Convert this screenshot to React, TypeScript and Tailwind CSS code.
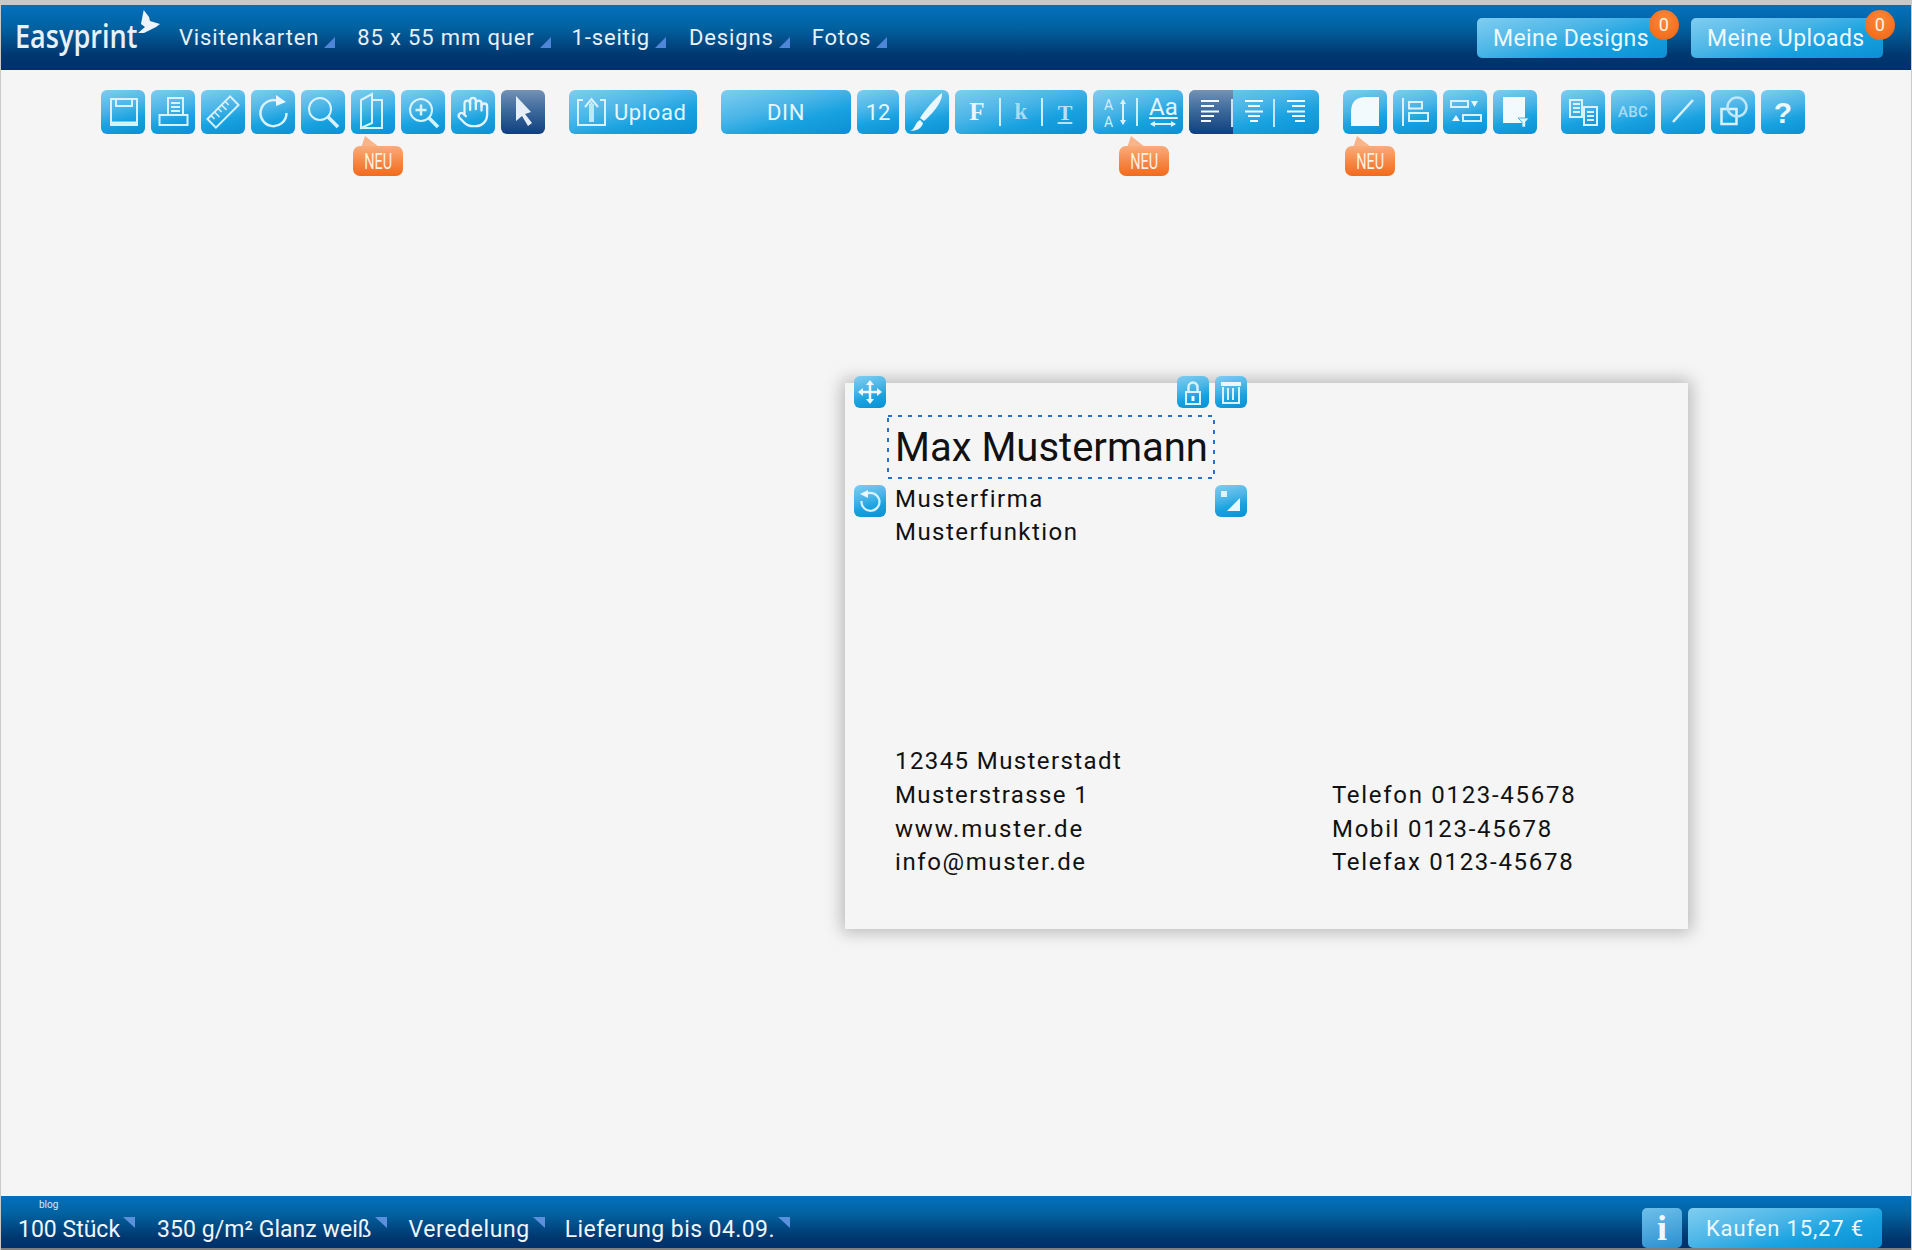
import type { ReactNode } from "react";
import { Hand } from "lucide-react";

const blue = "bg-[linear-gradient(165deg,#80cdf0_0%,#4ab5e7_40%,#18a2e0_66%,#0a90d4_100%)]";
const dark = "bg-[linear-gradient(180deg,#7392b6_0%,#3e6a9c_45%,#0f3f7f_100%)]";
const ic = { fill: "none", stroke: "#d9f1fb", strokeWidth: 2 };
const solid = { fill: "#eaf7fd" };

function Icon({ children }: { children: ReactNode }) {
  return (
    <svg viewBox="0 0 44 44" className="w-[44px] h-[44px]">
      {children}
    </svg>
  );
}

function Btn({ children, active, className = "w-[44px]" }: { children?: ReactNode; active?: boolean; className?: string }) {
  return (
    <div className={`relative h-[44px] rounded-[6px] flex items-center justify-center text-[#e6f6fd] text-[22px] ${active ? dark : blue} ${className}`}>
      {children}
    </div>
  );
}

function Neu({ className }: { className: string }) {
  return (
    <div className={`absolute top-[46px] h-[40px] w-[50px] ${className}`}>
      <svg viewBox="0 0 50 12" className="absolute left-0 top-0 w-[50px] h-[12px]">
        <path d="M8 12 L12 0 L26 11 L26 12 Z" fill="#f9b48a" />
      </svg>
      <div className="absolute left-0 top-[10px] w-[50px] h-[30px] rounded-[7px] bg-[linear-gradient(180deg,#f9ac7b_0%,#f58a4a_50%,#f36a1b_100%)] flex items-center justify-center">
        <span className="text-[#fff0e6] text-[22px] scale-x-[0.66]">NEU</span>
      </div>
    </div>
  );
}

function NavItem({ label, className }: { label: string; className: string }) {
  return (
    <div className={`flex items-center tracking-[0.85px] text-[22px] text-[#e8f1f8] ${className}`}>
      <span>{label}</span>
      <svg viewBox="0 0 11 11" className="w-[11px] h-[11px] ml-[5px] mt-[10px]">
        <polygon points="11,0 11,11 0,11" fill="#4f86d8" />
      </svg>
    </div>
  );
}

function FootItem({ label, className }: { label: string; className: string }) {
  return (
    <div className={`flex text-[23px] leading-[30px] text-[#f0f6fb] mb-[3px] ${className}`}>
      <span>{label}</span>
      <svg viewBox="0 0 12 11" className="w-[12px] h-[11px] ml-[3px] mt-[2px]">
        <polygon points="0,0 12,0 12,11" fill="#5b90dc" />
      </svg>
    </div>
  );
}

function TopBtn({ label, className }: { label: string; className: string }) {
  return (
    <div className={`relative h-[40px] rounded-[5px] flex items-center pl-[16px] pt-[3px] text-[23px] tracking-[0.4px] text-[#eef9fe] ${blue} ${className}`}>
      {label}
      <div className="absolute right-[-12px] top-[-8px] w-[30px] h-[30px] rounded-full bg-[radial-gradient(circle_at_50%_35%,#fb8a3c,#f0620f)] flex items-center justify-center text-[18px] text-[#fff3e8]">
        0
      </div>
    </div>
  );
}

function Handle({ className, children }: { className: string; children: ReactNode }) {
  return (
    <div className={`absolute w-[32px] h-[32px] rounded-[6px] ${blue} ${className}`}>
      <svg viewBox="0 0 32 32" className="w-[32px] h-[32px]">
        {children}
      </svg>
    </div>
  );
}

export default function App() {
  return (
    <div className="w-[1912px] h-[1250px] flex flex-col bg-[#f5f5f5] border-x border-x-[#c9c9c9] font-[Roboto,sans-serif] overflow-hidden">
      <div className="h-[5px] bg-[#c9c9c9] mx-[-1px] shrink-0" />

      {/* Header */}
      <div className="h-[65px] shrink-0 flex items-center bg-[linear-gradient(180deg,#0271bf_0%,#02619f_35%,#00376f_78%,#00306b_100%)]">
        <div className="relative w-[178px] h-[65px]">
          <span className="absolute left-[14px] top-[8px] font-['Open_Sans',sans-serif] font-semibold text-[33px] leading-[45px] text-[#e9f1f8] origin-left scale-x-[0.82]">
            Easyprint
          </span>
          <svg viewBox="0 0 24 26" className="absolute left-[136px] top-[4px] w-[24px] h-[26px]">
            <path d="M4 15L6.7 1L12 8L13 12L23 15L19 18L13 21L7 24L1 24L8 18Z" fill="#eef4fa" />
          </svg>
        </div>
        <NavItem label="Visitenkarten" className="" />
        <NavItem label="85 x 55 mm quer" className="ml-[22px]" />
        <NavItem label="1-seitig" className="ml-[21px]" />
        <NavItem label="Designs" className="ml-[23px]" />
        <NavItem label="Fotos" className="ml-[22px]" />
        <TopBtn label="Meine Designs" className="ml-auto w-[190px]" />
        <TopBtn label="Meine Uploads" className="ml-[24px] mr-[28px] w-[192px]" />
      </div>

      {/* Toolbar */}
      <div className="mt-[20px] ml-[100px] flex h-[44px] shrink-0">
        <div className="flex gap-[6px]">
          <Btn>
            <Icon>
              <path d="M10 9H36V35H10Z M15 9V16H31V9" {...ic} />
              <path d="M10 33H36" {...ic} strokeWidth={3} />
            </Icon>
          </Btn>
          <Btn>
            <Icon>
              <path d="M8.5 25H36.5V35H8.5Z M17 25V8H32V25 M20 13H29 M20 17H29 M20 21H29" {...ic} />
            </Icon>
          </Btn>
          <Btn>
            <Icon>
              <g transform="rotate(-45 22 22)">
                <rect x="6" y="16" width="32" height="12" {...ic} />
                <path d="M11 16V21 M16 16V23 M21 16V21 M26 16V23 M31 16V21" {...ic} strokeWidth={1.5} />
              </g>
            </Icon>
          </Btn>
          <Btn>
            <Icon>
              <path d="M30 12.5A13 13 0 1 0 35.5 23" {...ic} strokeWidth={2.5} />
              <polygon points="25,5 35,12 25,16" fill="#eaf7fd" />
            </Icon>
          </Btn>
          <Btn>
            <Icon>
              <circle cx="19" cy="19" r="11" {...ic} />
              <path d="M27 27L37 37" {...ic} strokeWidth={3.5} />
            </Icon>
          </Btn>
          <Btn>
            <Icon>
              <path d="M10 10L21 4V33L10 38Z M21 10H31V38H10" {...ic} />
            </Icon>
            <Neu className="left-[2px]" />
          </Btn>
          <Btn>
            <Icon>
              <circle cx="20" cy="20" r="11" {...ic} />
              <path d="M14.5 20H25.5 M20 14.5V25.5" {...ic} strokeWidth={2.5} />
              <path d="M28 28L37 37" {...ic} strokeWidth={3.5} />
            </Icon>
          </Btn>
          <Btn>
            <Hand size={34} color="#e3f4fc" strokeWidth={1.6} />
          </Btn>
          <Btn active>
            <Icon>
              <polygon points="15,6 30,22 24,24 31,33 27,36 21,26 15,31" fill="#e6eef6" />
            </Icon>
          </Btn>
        </div>

        <Btn className="ml-[24px] w-[128px] justify-start">
          <svg viewBox="0 0 40 44" className="w-[40px] h-[44px] shrink-0">
            <path d="M14 10H9V35H36V10H31 M22.5 32V12 M16 17L22.5 9L29 17" {...ic} />
            <path d="M22.5 32V14" {...ic} strokeWidth={5} stroke="#bfe6f8" />
          </svg>
          <span className="tracking-[0.6px] ml-[5px]">Upload</span>
        </Btn>

        <Btn className="ml-[24px] w-[130px] tracking-[0.6px]">DIN</Btn>
        <div className="ml-[6px] flex gap-[6px]">
          <Btn className="w-[42px]">12</Btn>
          <Btn>
            <Icon>
              <path d="M37 3C38 12 26 25 19 31L15 28C20 20 30 8 37 3Z" {...solid} />
              <path d="M5 41C10 40 10 32 15 30L18 33C17 38 12 41 5 41Z" {...solid} />
            </Icon>
          </Btn>
          <Btn className="w-[132px] text-[#eaf7fd]">
            <div className="flex w-[132px] h-[44px]">
              <div className="w-[44px] flex items-center justify-center font-['Liberation_Serif',serif] font-bold text-[25px]">F</div>
              <div className="w-[44px] flex items-center justify-center font-['Liberation_Serif',serif] font-bold text-[#a9dcf4] text-[23px] border-x-2 border-x-[#cdeefb] my-[8px]">k</div>
              <div className="w-[44px] flex items-center justify-center font-['Liberation_Serif',serif] font-bold text-[#b5e2f6] text-[22px] underline underline-offset-2">T</div>
            </div>
          </Btn>
          <Btn className="w-[90px]">
            <div className="flex w-[90px] h-[44px] text-[#d3effb]">
              <div className="relative w-[45px] border-r-2 border-r-[#cdeefb] my-[8px]">
                <span className="absolute left-[11px] top-[-1px] text-[14px] leading-[16px]">A</span>
                <span className="absolute left-[11px] top-[16px] text-[14px] leading-[16px]">A</span>
                <svg viewBox="0 0 8 28" className="absolute left-[26px] top-0 w-[8px] h-[28px]">
                  <path d="M4 2V26" {...ic} />
                  <path d="M1 6L4 1L7 6Z M1 22L4 27L7 22Z" fill="#d9f1fb" />
                </svg>
              </div>
              <div className="relative flex-1">
                <span className="absolute left-[11px] top-[4px] text-[24px] leading-[26px] text-[#e3f5fc] underline underline-offset-2">Aa</span>
                <svg viewBox="0 0 28 8" className="absolute left-[11px] top-[30px] w-[28px] h-[8px]">
                  <path d="M2 4H26" {...ic} />
                  <path d="M6 1L1 4L6 7Z M22 1L27 4L22 7Z" fill="#d9f1fb" />
                </svg>
              </div>
            </div>
            <Neu className="left-[26px]" />
          </Btn>
          <div className={`flex w-[130px] h-[44px] rounded-[6px] overflow-hidden ${blue}`}>
            <div className={`w-[44px] h-[44px] ${dark}`}>
              <Icon>
                <path d="M12 11H30 M12 16H25 M12 21.5H30 M12 26H25 M12 31H22" stroke="#f4f9fd" strokeWidth={2} fill="none" />
                <path d="M43 9V37" stroke="#c8e4f5" strokeWidth={2} />
              </Icon>
            </div>
            <div className="w-[42px] h-[44px]">
              <svg viewBox="0 0 42 44" className="w-[42px] h-[44px]">
                <path d="M12 11H30 M15 16H27 M12 21.5H30 M15 26H27 M17 31H25" stroke="#f4f9fd" strokeWidth={2} fill="none" />
                <path d="M41 9V37" stroke="#c8e4f5" strokeWidth={2} />
              </svg>
            </div>
            <div className="w-[44px] h-[44px]">
              <Icon>
                <path d="M12 11H30 M17 16H30 M12 21.5H30 M17 26H30 M20 31H30" stroke="#f4f9fd" strokeWidth={2} fill="none" />
              </Icon>
            </div>
          </div>
        </div>

        <div className="ml-[24px] flex gap-[6px]">
          <Btn>
            <Icon>
              <path d="M8 36V22Q8 7 23 7H36V36Z" fill="#f3fafd" />
            </Icon>
            <Neu className="left-[2px]" />
          </Btn>
          <Btn>
            <Icon>
              <path d="M10 8V36" {...ic} />
              <rect x="16" y="12" width="13" height="6.5" {...ic} />
              <rect x="16" y="23" width="19" height="8" {...ic} />
            </Icon>
          </Btn>
          <Btn>
            <Icon>
              <rect x="8" y="11" width="17" height="6" {...ic} />
              <rect x="20" y="25" width="18" height="6" {...ic} />
              <polygon points="28,11 35,11 31.5,17" {...solid} />
              <polygon points="9,31 17,31 13,25" {...solid} />
            </Icon>
          </Btn>
          <Btn>
            <Icon>
              <rect x="10" y="7" width="22" height="26" fill="#f3fafd" />
              <path d="M25 28H36L32.5 32V37H29V32Z" fill="#e4f5fc" stroke="#2aa4df" strokeWidth={0.8} />
            </Icon>
          </Btn>
        </div>

        <div className="ml-[24px] flex gap-[6px]">
          <Btn>
            <Icon>
              <path d="M9 10H21V27H9Z M23 17H36V35H23Z" {...ic} />
              <path d="M12 14H19 M12 18H19 M12 22H19 M26 22H33 M26 26H33 M26 30H33" {...ic} strokeWidth={2} />
            </Icon>
          </Btn>
          <Btn>
            <span className="text-[15px] font-medium text-[#a9dcf4] tracking-[0.3px]">ABC</span>
          </Btn>
          <Btn>
            <Icon>
              <path d="M32 10L12 32" {...ic} strokeWidth={2.5} />
            </Icon>
          </Btn>
          <Btn>
            <Icon>
              <rect x="10.5" y="19" width="15" height="15" {...ic} strokeWidth={2.5} />
              <circle cx="26" cy="17" r="9.5" fill="none" stroke="#bde6f8" strokeWidth={2.5} />
            </Icon>
          </Btn>
          <Btn>
            <span className="font-['Liberation_Sans',sans-serif] font-bold text-[30px] text-[#eef9fe]">?</span>
          </Btn>
        </div>
      </div>

      {/* Canvas */}
      <div className="relative mt-[249px] ml-[844px] w-[843px] h-[546px] shrink-0 flex flex-col bg-[#f5f5f5] shadow-[0_0_16px_3px_rgba(0,0,0,0.26)] pl-[50px] pb-[49px] text-[#111]">
        <Handle className="left-[9px] top-[-7px]">
          <path d="M16 4L20 9H12Z M16 28L20 23H12Z M4 16L9 12V20Z M28 16L23 12V20Z" fill="#f0f9fd" />
          <path d="M8 16H24 M16 8V24" stroke="#f0f9fd" strokeWidth={2.5} />
        </Handle>
        <Handle className="left-[332px] top-[-7px]">
          <path d="M11.5 16V11A4.5 4.5 0 0 1 20.5 11V16" fill="none" stroke="#d9f1fb" strokeWidth={2.5} />
          <path d="M9 16H23V28H9Z" fill="none" stroke="#d9f1fb" strokeWidth={2} />
          <path d="M16 20V25" stroke="#eaf7fd" strokeWidth={3} />
        </Handle>
        <Handle className="left-[370px] top-[-7px]">
          <path d="M6 6H26V10H6Z" fill="#eaf7fd" />
          <path d="M8 11V27H24V11 M13 12V24 M18 12V24" fill="none" stroke="#d9f1fb" strokeWidth={2} />
        </Handle>
        <Handle className="left-[9px] top-[102px]">
          <path d="M12 9A9 9 0 1 1 7.5 16" fill="none" stroke="#d9f1fb" strokeWidth={2.2} />
          <path d="M6 9L14 5V13Z" fill="#eaf7fd" />
        </Handle>
        <Handle className="left-[370px] top-[102px]">
          <path d="M6 6H12V12H6Z" fill="#e0f3fb" />
          <path d="M25 13V26H12Z" fill="#eaf7fd" />
        </Handle>

        <div className="relative mt-[32px] ml-[-8px] pl-[8px] w-[328px] h-[64px] shrink-0 leading-[66px] text-[40px] whitespace-nowrap">
          <svg viewBox="0 0 328 64" className="absolute left-0 top-0 w-[328px] h-[64px]">
            <rect x="1" y="1" width="326" height="62" fill="none" stroke="#2a6fd0" strokeWidth={2} strokeDasharray="4 6" />
          </svg>
          Max Mustermann
        </div>
        <div className="text-[24px] leading-[33px] mt-[4px]">
          <p className="tracking-[1.55px]">Musterfirma</p>
          <p className="tracking-[1.45px]">Musterfunktion</p>
        </div>

        <div className="mt-auto flex items-end text-[24px] leading-[33.7px]">
          <div className="w-[437px] tracking-[1.4px]">
            <p>12345 Musterstadt</p>
            <p>Musterstrasse 1</p>
            <p className="tracking-[1.8px]">www.muster.de</p>
            <p className="tracking-[1.6px]">info@muster.de</p>
          </div>
          <div className="tracking-[1.7px]">
            <p>Telefon 0123-45678</p>
            <p>Mobil 0123-45678</p>
            <p>Telefax 0123-45678</p>
          </div>
        </div>
      </div>

      {/* Footer */}
      <div className="relative mt-auto h-[54px] shrink-0 flex items-end border-b-2 border-b-[#7f7f7f] bg-[linear-gradient(180deg,#0271bf_0%,#02619f_35%,#00376f_80%,#00306b_100%)]">
        <span className="absolute left-[38px] top-[3px] text-[10px] leading-[12px] text-[#dbe8f3]">blog</span>
        <FootItem label="100 Stück" className="ml-[17px]" />
        <FootItem label="350 g/m² Glanz weiß" className="ml-[22px] tracking-[0.05px]" />
        <FootItem label="Veredelung" className="ml-[22px] tracking-[0.6px]" />
        <FootItem label="Lieferung bis 04.09." className="ml-[20px] tracking-[0.42px]" />
        <div className="ml-auto mr-[6px] w-[40px] h-[40px] rounded-[5px] bg-[linear-gradient(165deg,#6fc0ea_0%,#2a8fd0_100%)] flex items-center justify-center font-['Liberation_Serif',serif] font-bold text-[36px] text-[#eef9fe]">
          i
        </div>
        <div className={`mr-[29px] w-[194px] h-[40px] rounded-[5px] flex items-center justify-center text-[22px] tracking-[0.85px] text-[#eef9fe] ${blue}`}>
          Kaufen 15,27 €
        </div>
      </div>
    </div>
  );
}
